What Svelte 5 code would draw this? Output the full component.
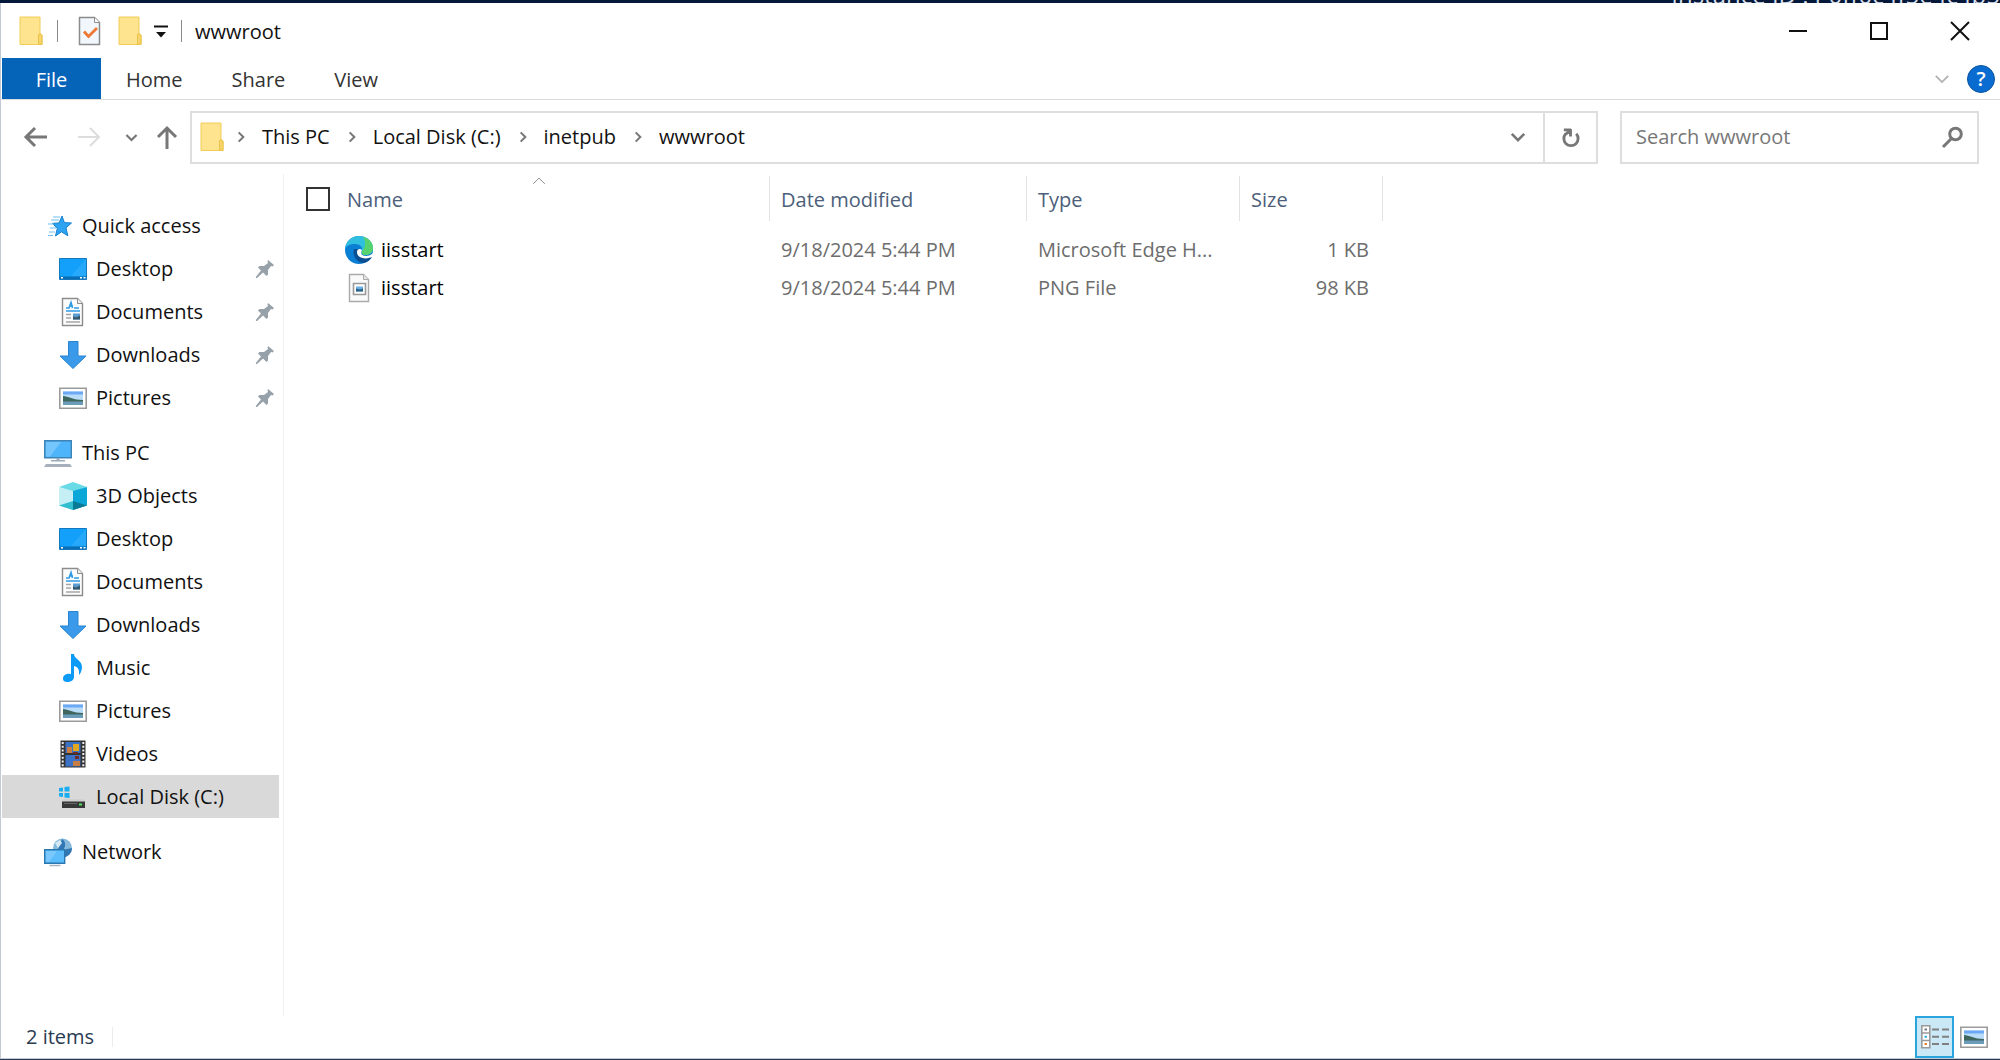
<script lang="ts">
  type NavItem = { label: string; icon: string; pinned?: boolean };
  type NavGroup = NavItem & { items: NavItem[] };

  const tabs = ['Home', 'Share', 'View'];
  const crumbs = ['This PC', 'Local Disk (C:)', 'inetpub', 'wwwroot'];

  const groups: NavGroup[] = [
    {
      label: 'Quick access',
      icon: 'star',
      items: [
        { label: 'Desktop', icon: 'desktop', pinned: true },
        { label: 'Documents', icon: 'document', pinned: true },
        { label: 'Downloads', icon: 'download', pinned: true },
        { label: 'Pictures', icon: 'picture', pinned: true }
      ]
    },
    {
      label: 'This PC',
      icon: 'pc',
      items: [
        { label: '3D Objects', icon: 'cube' },
        { label: 'Desktop', icon: 'desktop' },
        { label: 'Documents', icon: 'document' },
        { label: 'Downloads', icon: 'download' },
        { label: 'Music', icon: 'music' },
        { label: 'Pictures', icon: 'picture' },
        { label: 'Videos', icon: 'video' },
        { label: 'Local Disk (C:)', icon: 'disk' }
      ]
    },
    { label: 'Network', icon: 'network', items: [] }
  ];

  const files = [
    { name: 'iisstart', icon: 'edge', modified: '9/18/2024 5:44 PM', type: 'Microsoft Edge H...', size: '1 KB' },
    { name: 'iisstart', icon: 'png', modified: '9/18/2024 5:44 PM', type: 'PNG File', size: '98 KB' }
  ];

  let selected = $state('Local Disk (C:)');
  let query = $state('');
  let view = $state('details');
</script>

{#snippet icon(name: string)}
  <svg class="icon" viewBox="0 0 28 28" aria-hidden="true">
    {#if name === 'folder'}
      <path d="M4 0h20v17l2 1v9.500H4z" fill="#ffe48f" stroke="#f0cd58" />
      <path d="M22.500 27V17.500l1.500-1 2 1.500v9.500z" fill="#f7d56a" stroke="#eac24a" />
    {:else if name === 'properties'}
      <path d="M3.500.500h15l5 5v22h-20z" fill="#f1f7fc" stroke="#8b8b8b" stroke-width="1.500" />
      <path d="M18.500.500v5h5" fill="#fff" stroke="#8b8b8b" />
      <path d="M8 14.500l4.500 5L21 11" fill="none" stroke="#ee7733" stroke-width="2.800" />
    {:else if name === 'star'}
      <path d="M18 4l2.400 6.600 7.100.400-5.500 4.800 1.800 8-6.300-4-6 4.200 1.800-7.500-4.800-5.200 6.500-.300z" fill="#2ea3f2" stroke="#1580cf" />
      <path d="M9 5h7M7 8h8M4 12h6M6 16h6M5 20h6M4 23.500h5" stroke="#6fc0f5" stroke-width="1.200" />
    {:else if name === 'desktop'}
      <path d="M.500 3.500h27v21H.500z" fill="#12a0fb" stroke="#1478bd" />
      <path d="M27 4v17H12z" fill="#34affc" opacity=".6" />
      <path d="M1 21.500h26V24H1z" fill="#0a6db5" />
      <path d="M2 22.800h2M21 22.800h2M24.500 22.800h2" stroke="#fff" stroke-width="1.500" />
    {:else if name === 'document'}
      <path d="M3.500.500h15l5 5v22h-20z" fill="#fcfcfc" stroke="#8c8c8c" stroke-width="1.400" />
      <path d="M18.500.500v5h5" fill="#eee" stroke="#8c8c8c" />
      <path d="M7 10h3l2-5.500 1.500 5.500M11 8h3M15 10h5M7 13h14" fill="none" stroke="#2f9be6" stroke-width="1.600" />
      <path d="M7 16.500h5M7 20h5M7 24h14" stroke="#a5a5a5" stroke-width="1.300" />
      <path d="M14 15.500h7v6h-7z" fill="#5c9bd0" />
      <path d="M14 21.500v-3l3 1 4-2v4z" fill="#38576b" />
    {:else if name === 'download'}
      <path d="M9.500.500h9.500V15h8L14 27.500 1 15h8.500z" fill="#3a99e8" stroke="#2685d3" />
    {:else if name === 'picture'}
      <path d="M.800 4.300h26.400v20H.800z" fill="#fff" stroke="#9b9b9b" stroke-width="1.600" />
      <path d="M4 7.500h20v13.500H4z" fill="#b9dcf8" />
      <path d="M4 7.500h20v3H4z" fill="#6ca8f3" />
      <path d="M4 12c5 0 10 4 20 4v2H4z" fill="#40675f" />
      <path d="M4 17.500h20V21H4z" fill="#6b9dbb" />
    {:else if name === 'pc'}
      <path d="M.700 1.700h26.600v17H.700z" fill="#4fb5fb" stroke="#3e84b5" stroke-width="1.400" />
      <path d="M2 3h15L6 17.500H2z" fill="#85ccfc" opacity=".7" />
      <path d="M12.500 19h3v2h-3zM7 21h14v1.500H7z" fill="#9babbb" />
      <path d="M2 25h24l2 3H0z" fill="#a6b1bd" />
    {:else if name === 'cube'}
      <path d="M0 5l14-5 14 5-14 5z" fill="#6adbe6" />
      <path d="M0 5l14 4v19L0 23.500z" fill="#c5eff4" />
      <path d="M28 5L14 9v19l14-4.500z" fill="#0aa7d8" />
      <path d="M0 23.500L14 19v9z" fill="#31bfd0" />
      <path d="M28 23.500L14 19v9z" fill="#087a95" />
    {:else if name === 'music'}
      <path d="M12 0h3c0 5 8 6 8 13 0 4-2 7-3 8 .500-6-1-8-5-9v11c0 3-3 5-7 5-3 0-4-1.500-4-3.500C4 21 8 19 12 20z" fill="#0d9bf5" />
    {:else if name === 'video'}
      <path d="M1.500.500h25v27h-25z" fill="#333" />
      <path d="M6.500 2h15v11h-15zM6.500 15h15v11.500h-15z" fill="#3c72c5" />
      <path d="M8 7h5v6H8zM14 21h7v5h-7z" fill="#c87d42" />
      <path d="M14 4h6v7h-6z" fill="#e1a91f" />
      <path d="M16 16h4v3h-4zM14 12h5v2h-5z" fill="#6c2b24" />
      <path d="M3.700 2v25M24.300 2v25" stroke="#eee" stroke-width="2" stroke-dasharray="2 1.700" />
    {:else if name === 'disk'}
      <path d="M0 5l4-.500v4H0zM5.500 4l5-.500v5h-5zM0 10h4v4l-4-.500zM5.500 10h5v5l-5-.500z" fill="#19aef2" />
      <path d="M5 16h19l2 3H3z" fill="#d0d0d0" />
      <path d="M3 18.500h23V25H3z" fill="#383838" />
      <path d="M5 20.500h13" stroke="#666" />
      <path d="M20 21.500h3" stroke="#4be35c" stroke-width="2" />
    {:else if name === 'network'}
      <circle cx="18.500" cy="10" r="9.500" fill="#87b9dc" />
      <path d="M18 1c4 2 4 8 1 11l9-2c0 5-4 9-9 9.500l-6-6z" fill="#3177b4" />
      <path d="M11 5l5-3 2 3-4 5z" fill="#d4e8f4" />
      <path d="M.700 11.700h20v13.500H.700z" fill="#5dbcfb" stroke="#2979b0" stroke-width="1.400" />
      <path d="M2 13h11L5 24H2z" fill="#8fd2fd" opacity=".6" />
      <path d="M5.500 27.500h11" stroke="#a5b4c2" stroke-width="1.500" />
    {:else if name === 'edge'}
      <circle cx="14" cy="14" r="14" fill="#0b7fd4" />
      <path d="M0 13C1 5 7 0 14 0c8 0 14 6 14 12 0 5-4 7-7 7-4 0-5-2-4-4 1-4-2-7-7-7-5 0-9 2-10 5z" fill="#31bfe0" />
      <path d="M18 1c6 1 10 6 10 11 0 5-4 7-7 7-4 0-5-2-4-4 4-4 4-10 1-14z" fill="#56d36e" />
      <path d="M9 13c-2 7 3 14 10 14 4-1 7-4 8-6-6 2-13 1-14-5 0-2 1-3 1-3z" fill="#0b4f93" />
      <path d="M12 16c0-3 3-4 5-2-2 4 0 6 4 6 3 0 5-1 7-3l-1 4c-7 3-15 1-15-5z" fill="#fff" />
    {:else if name === 'png'}
      <path d="M4.500.500h14l5 5v22h-19z" fill="#fafafa" stroke="#aaa" stroke-width="1.400" />
      <path d="M18.500.500v5h5" fill="#e8e8e8" stroke="#aaa" />
      <path d="M8.500 9.500h12v11h-12z" fill="#fff" stroke="#999" stroke-width="1.600" />
      <path d="M11 12.500h7v5h-7z" fill="#6aaee6" />
      <path d="M11 17.500v-3l4 1 3-1v3z" fill="#2b6288" />
    {:else if name === 'details'}
      <path d="M.800 2.800h8v22h-8zM.800 10h8M.800 17.500h8" fill="#fff" stroke="#9a9a9a" stroke-width="1.600" />
      <path d="M3.500 6.500h2.500" stroke="#777" stroke-width="2" />
      <path d="M3.500 13.800h2.500" stroke="#35aee2" stroke-width="2" />
      <path d="M3.500 21h2.500" stroke="#e8822f" stroke-width="2" />
      <path d="M11 6.500h7M21 6.500h7M11 13.800h7M21 13.800h7M11 21h7M21 21h7" stroke="#808080" stroke-width="2" />
    {/if}
  </svg>
{/snippet}

{#snippet chevron(direction: string)}
  <svg class="chevron {direction}" viewBox="0 0 18 18" aria-hidden="true">
    <path d="M2 5.500l7 7 7-7" />
  </svg>
{/snippet}

<div class="desktop">
  <div class="backdrop"><span>Instance ID : i-0ff0c4f5e4c4b5</span></div>

  <main class="window">
    <header class="titlebar">
      {@render icon('folder')}
      <span class="divider first"></span>
      <button class="quick" aria-label="Properties">{@render icon('properties')}</button>
      <button class="quick" aria-label="New folder">{@render icon('folder')}</button>
      <button class="customize" aria-label="Customize Quick Access Toolbar">
        <svg viewBox="0 0 14 14"><path d="M0 2.500h14" stroke="#111" stroke-width="2" /><path d="M2 8h10l-5 5.500z" fill="#111" /></svg>
      </button>
      <span class="divider"></span>
      <h1>wwwroot</h1>
      <div class="controls">
        <button aria-label="Minimize"><svg viewBox="0 0 18 18"><path d="M0 9h18" /></svg></button>
        <button aria-label="Maximize"><svg viewBox="0 0 18 18"><path d="M1 1h16v16H1z" /></svg></button>
        <button aria-label="Close"><svg viewBox="0 0 18 18"><path d="M0 0l18 18M18 0L0 18" /></svg></button>
      </div>
    </header>

    <nav class="ribbon" aria-label="Ribbon">
      <button class="file">File</button>
      {#each tabs as tab}
        <button class="tab">{tab}</button>
      {/each}
      <button class="expand" aria-label="Expand the Ribbon">{@render chevron('down')}</button>
      <button class="help" aria-label="Help">?</button>
    </nav>

    <div class="toolbar">
      <div class="history">
        <button aria-label="Back"><svg viewBox="0 0 22 22"><path d="M10 2l-9 9 9 9M1 11h21" /></svg></button>
        <button class="forward" aria-label="Forward" disabled><svg viewBox="0 0 22 22"><path d="M12 2l9 9-9 9M21 11H0" /></svg></button>
        <button class="recent" aria-label="Recent locations">{@render chevron('down')}</button>
        <button aria-label="Up"><svg viewBox="0 0 22 22"><path d="M2 11l9-9 9 9M11 2v21" /></svg></button>
      </div>
      <div class="address">
        {@render icon('folder')}
        <ol class="crumbs">
          {#each crumbs as crumb}
            <li>{@render chevron('right')}<button>{crumb}</button></li>
          {/each}
        </ol>
        <button class="previous" aria-label="Previous locations">{@render chevron('down')}</button>
        <button class="refresh" aria-label="Refresh">
          <svg viewBox="0 0 20 20"><path d="M5 6a7.500 7.500 0 1 0 11 0M3 2h7.500M10 1v8M10 2.500L5 6.500" /></svg>
        </button>
      </div>
      <div class="search">
        <input type="text" placeholder="Search wwwroot" aria-label="Search wwwroot" bind:value={query} />
        <svg viewBox="0 0 22 22" aria-hidden="true"><circle cx="14.500" cy="8" r="5.800" /><path d="M10.500 12.500l-8.500 8.500" /></svg>
      </div>
    </div>

    <div class="body">
      <nav class="sidebar" aria-label="Folders">
        {#each groups as group}
          <section>
            <button class="nav-row top">
              {@render icon(group.icon)}<span>{group.label}</span>
            </button>
            {#each group.items as item}
              <button class="nav-row" class:selected={selected === item.label} onclick={() => (selected = item.label)}>
                {@render icon(item.icon)}<span>{item.label}</span>
                {#if item.pinned}
                  <svg class="pin" viewBox="0 0 18 18" aria-hidden="true">
                    <path d="M12 0l6 5-1.500 1.500-1.500-.500-3 4v4.500L10.500 16 7 12.500 1 18H0l-.200-1L5 10.500 2 7.500 3.500 6H8l4-3-.500-1.500z" />
                  </svg>
                {/if}
              </button>
            {/each}
          </section>
        {/each}
      </nav>

      <div class="content">
        <table>
          <colgroup>
            <col class="col-name" /><col class="col-date" /><col class="col-type" /><col class="col-size" />
          </colgroup>
          <thead>
            <tr>
              <th class="name-col">
                <div class="name-head">
                  <input type="checkbox" aria-label="Select all items" />
                  <span>Name</span>
                  {@render chevron('up')}
                </div>
              </th>
              <th>Date modified</th>
              <th>Type</th>
              <th>Size</th>
            </tr>
          </thead>
          <tbody>
            {#each files as file}
              <tr>
                <td><a href="#{file.icon}">{@render icon(file.icon)}{file.name}</a></td>
                <td>{file.modified}</td>
                <td>{file.type}</td>
                <td class="size">{file.size}</td>
              </tr>
            {/each}
          </tbody>
        </table>
      </div>
    </div>

    <footer class="status">
      <span class="count">{files.length} items</span>
      <div class="views">
        <button aria-label="Details" class:active={view === 'details'} onclick={() => (view = 'details')}>
          {@render icon('details')}
        </button>
        <button aria-label="Large thumbnails" class:active={view === 'thumbs'} onclick={() => (view = 'thumbs')}>
          {@render icon('picture')}
        </button>
      </div>
    </footer>
  </main>
</div>

<style>
  :global(body) {
    margin: 0;
    background: #04193a;
  }

  .desktop {
    display: flex;
    flex-direction: column;
    box-sizing: border-box;
    min-height: 100vh;
    padding-bottom: 1px;
    background: #2c3b55;
    font-family: 'Open Sans', 'Noto Sans', sans-serif;
    font-size: 20px;
    line-height: 28px;
    color: #111;
  }

  .desktop * {
    box-sizing: border-box;
  }

  button,
  input {
    margin: 0;
    padding: 0;
    border: 0;
    background: none;
    font: inherit;
    color: inherit;
  }

  svg {
    display: block;
    flex: none;
    overflow: visible;
  }

  .icon {
    width: 28px;
    height: 28px;
  }

  .chevron {
    width: 16px;
    height: 16px;
    fill: none;
    stroke: #777;
    stroke-width: 2;
  }

  .chevron.right {
    transform: rotate(-90deg);
  }

  .chevron.up {
    transform: rotate(180deg);
  }

  .backdrop {
    display: flex;
    justify-content: flex-end;
    align-items: flex-end;
    height: 3px;
    overflow: hidden;
    background: #04193a;
    color: #d5deea;
    font-size: 24px;
    line-height: 16px;
    white-space: nowrap;
  }

  .window {
    display: flex;
    flex-direction: column;
    flex: 1;
    border-left: 1px solid #c3cad5;
    border-bottom: 1px solid #c3cad5;
    background: #fff;
  }

  .titlebar {
    display: flex;
    align-items: center;
    height: 55px;
    padding-left: 15px;
  }

  .divider {
    width: 1px;
    height: 22px;
    margin: 0 13px;
    background: #8a8a8a;
  }

  .divider.first {
    margin-right: 18px;
  }

  .quick {
    margin-right: 11px;
  }

  .customize svg {
    width: 14px;
    height: 14px;
  }

  h1 {
    margin: 0;
    padding-top: 2px;
    font-size: 20px;
    font-weight: 400;
  }

  .controls {
    display: flex;
    margin-left: auto;
  }

  .controls button {
    display: grid;
    place-items: center;
    width: 81px;
    height: 55px;
  }

  .controls svg {
    width: 18px;
    height: 18px;
    fill: none;
    stroke: #111;
    stroke-width: 2;
  }

  .ribbon {
    display: flex;
    align-items: center;
    height: 42px;
    padding: 0 5px 0 1px;
    border-bottom: 1px solid #dadbdc;
    color: #333;
  }

  .file {
    width: 99px;
    height: 41px;
    padding-top: 2px;
    background: #0563b8;
    color: #fff;
  }

  .tab {
    height: 41px;
    padding: 2px 25px 0;
  }

  .tab + .tab {
    padding: 2px 25px 0 24px;
  }

  .expand {
    margin-left: auto;
  }

  .expand .chevron {
    stroke: #b0b0b0;
  }

  .help {
    width: 28px;
    height: 28px;
    margin-left: 17px;
    border: 1px solid #0b559f;
    border-radius: 50%;
    background: #0a6cd0;
    color: #fff;
    font-weight: 600;
    line-height: 26px;
  }

  .toolbar {
    display: flex;
    align-items: center;
    height: 74px;
    padding: 0 21px 0 24px;
  }

  .history {
    display: flex;
    align-items: center;
    width: 165px;
  }

  .history svg {
    width: 22px;
    height: 22px;
    fill: none;
    stroke: #777;
    stroke-width: 3;
  }

  .history .forward {
    margin: 0 25px 0 31px;
  }

  .history .forward svg {
    stroke: #ddd;
    stroke-width: 2;
  }

  .history .recent {
    margin-right: 18px;
  }

  .history .recent svg {
    width: 13px;
    height: 13px;
  }

  .address,
  .search {
    display: flex;
    align-items: center;
    height: 53px;
    border: 2px solid #dedede;
  }

  .address {
    flex: 1;
    padding-left: 5px;
  }

  .crumbs {
    display: flex;
    flex: 1;
    margin: 0;
    padding: 0 0 0 10px;
    list-style: none;
  }

  .crumbs li {
    display: flex;
    align-items: center;
    margin-right: 16px;
  }

  .crumbs .chevron {
    width: 12px;
    height: 12px;
    margin-right: 15px;
    stroke-width: 3;
  }

  .previous {
    width: 50px;
    padding-left: 17px;
  }

  .previous .chevron {
    stroke-width: 3;
  }

  .refresh {
    display: grid;
    place-items: center;
    width: 53px;
    height: 49px;
    border-left: 2px solid #dedede;
  }

  .refresh svg {
    width: 19px;
    height: 19px;
    fill: none;
    stroke: #777;
    stroke-width: 3;
  }

  .search {
    width: 359px;
    margin-left: 22px;
    padding: 0 14px;
  }

  .search input {
    flex: 1;
    min-width: 0;
    outline: 0;
  }

  .search input::placeholder {
    color: #777;
    opacity: 1;
  }

  .search svg {
    width: 22px;
    height: 22px;
    fill: none;
    stroke: #777;
    stroke-width: 3;
  }

  .body {
    display: flex;
    flex: 1;
  }

  .sidebar {
    width: 283px;
    padding: 31px 4px 0 1px;
    border-right: 1px solid #f0f0f0;
  }

  section {
    margin-bottom: 13px;
  }

  .nav-row {
    display: flex;
    align-items: center;
    gap: 9px;
    width: 100%;
    height: 43px;
    padding: 0 5px 0 57px;
    text-align: left;
    white-space: nowrap;
  }

  .nav-row.top {
    gap: 10px;
    height: 42px;
    padding-left: 42px;
  }

  .nav-row .pin {
    width: 18px;
    height: 18px;
    margin-left: auto;
    fill: #96a1a9;
  }

  .nav-row.selected {
    background: #d9d9d9;
  }

  .content {
    flex: 1;
    min-width: 0;
    padding-top: 2px;
  }

  table {
    width: 1099px;
    border-collapse: separate;
    border-spacing: 0;
    table-layout: fixed;
  }

  .col-name {
    width: 486px;
  }

  .col-date {
    width: 257px;
  }

  .col-type {
    width: 213px;
  }

  .col-size {
    width: 143px;
  }

  th {
    height: 45px;
    padding: 2px 0 0 11px;
    border-right: 1px solid #e3e3e3;
    color: #4c607a;
    font-weight: 400;
    text-align: left;
  }

  th.name-col {
    padding-top: 0;
  }

  .name-head {
    display: grid;
    grid-template-columns: 24px 1fr 18px 1fr;
    align-items: center;
    height: 45px;
    padding: 0 22px 0 11px;
  }

  .name-head span {
    padding: 2px 0 0 17px;
  }

  .name-head .chevron {
    align-self: start;
    width: 18px;
    height: 10px;
  }

  .name-head .chevron path {
    transform: scale(1.5);
    transform-origin: center;
    stroke-width: 1;
  }

  input[type='checkbox'] {
    appearance: none;
    width: 24px;
    height: 24px;
    border: 2px solid #333;
  }

  tbody::before {
    content: '';
    display: block;
    height: 10px;
  }

  td {
    height: 38px;
    padding: 0 14px 0 11px;
    color: #6d6d6d;
    white-space: nowrap;
  }

  td a {
    display: flex;
    align-items: center;
    gap: 8px;
    padding-left: 50px;
    color: #000;
    text-decoration: none;
  }

  .size {
    text-align: right;
  }

  .status {
    display: flex;
    align-items: center;
    height: 42px;
    padding: 0 7px 0 25px;
    color: #2a3b52;
  }

  .count {
    padding-right: 18px;
    border-right: 1px solid #ececec;
    line-height: 20px;
  }

  .views {
    display: flex;
    margin-left: auto;
  }

  .views button {
    display: grid;
    place-items: center;
    width: 39px;
    height: 42px;
  }

  .views .active {
    border: 2px solid #2ba5dd;
    background: #cbe8f6;
  }
</style>
